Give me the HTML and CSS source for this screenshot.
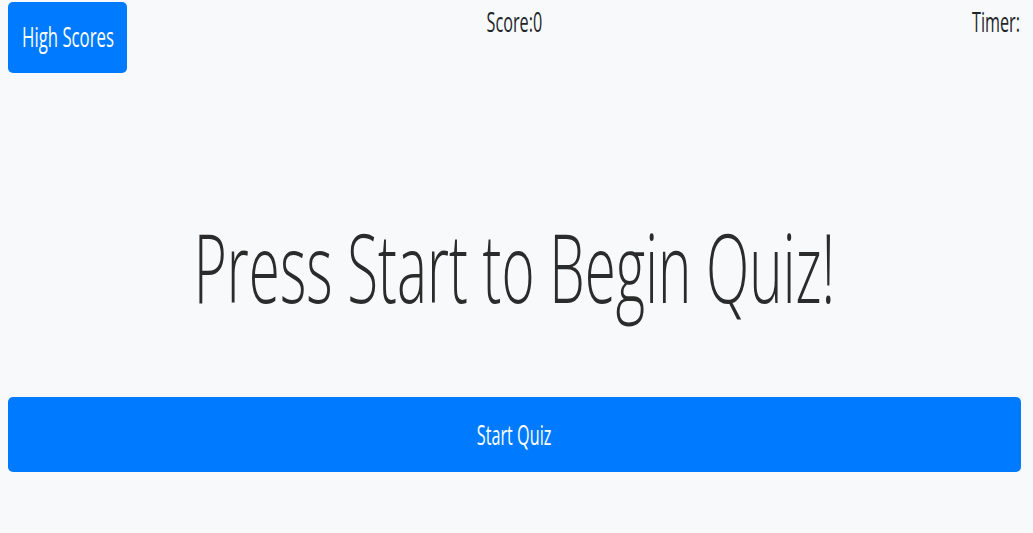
FILE: index.html
```html
<!DOCTYPE html>
<html lang="en">
<head>
<meta charset="utf-8">
<title>Quiz</title>
<link rel="stylesheet" href="styles.css">
</head>
<body>
<div class="page">
  <header class="topbar">
    <button class="btn btn-scores"><span class="sq sq-wide">High Scores</span></button>
    <div class="stat stat-score"><span class="sq">Score:0</span></div>
    <div class="stat stat-timer"><span class="sq sq-right">Timer:</span></div>
  </header>
  <main class="intro">
    <h1 class="title"><span class="sq sq-title">Press Start to Begin Quiz!</span></h1>
    <button class="btn btn-start"><span class="sq">Start Quiz</span></button>
  </main>
</div>
</body>
</html>
```
FILE: styles.css
```css
html, body {
  margin: 0;
  padding: 0;
  background: #f8f9fa;
}
body {
  font-family: "Open Sans", "Noto Sans", sans-serif;
  color: #212529;
}
.page {
  padding: 2px 12px 0 8px;
}
.sq {
  display: inline-block;
  transform: scaleX(0.6);
  transform-origin: center;
  white-space: nowrap;
}
.sq-wide {
  transform: scaleX(0.62);
}
.sq-right {
  transform-origin: right;
}
.sq-title {
  transform: scaleX(0.589);
  flex: none;
}
.topbar {
  display: grid;
  grid-template-columns: 1fr auto 1fr;
  align-items: start;
}
.btn {
  border: none;
  background: #007bff;
  color: #fff;
  font-family: inherit;
  font-size: 27px;
  line-height: 1.5;
  border-radius: 5px;
  display: flex;
  align-items: center;
  justify-content: center;
  padding: 0;
  cursor: pointer;
}
.btn-scores {
  width: 119px;
  height: 71px;
}
.stat {
  font-size: 27px;
  line-height: 1.5;
}
.stat-score {
  text-align: center;
}
.stat-timer {
  text-align: right;
  padding-right: 1px;
}
.intro {
  display: flex;
  flex-direction: column;
}
.title {
  margin: 126px 0 0;
  font-size: 96px;
  font-weight: 300;
  line-height: 1.4;
  color: #2b2b2b;
  display: flex;
  justify-content: center;
  overflow: hidden;
}
.btn-start {
  margin-top: 64px;
  width: 100%;
  height: 75px;
}
```
